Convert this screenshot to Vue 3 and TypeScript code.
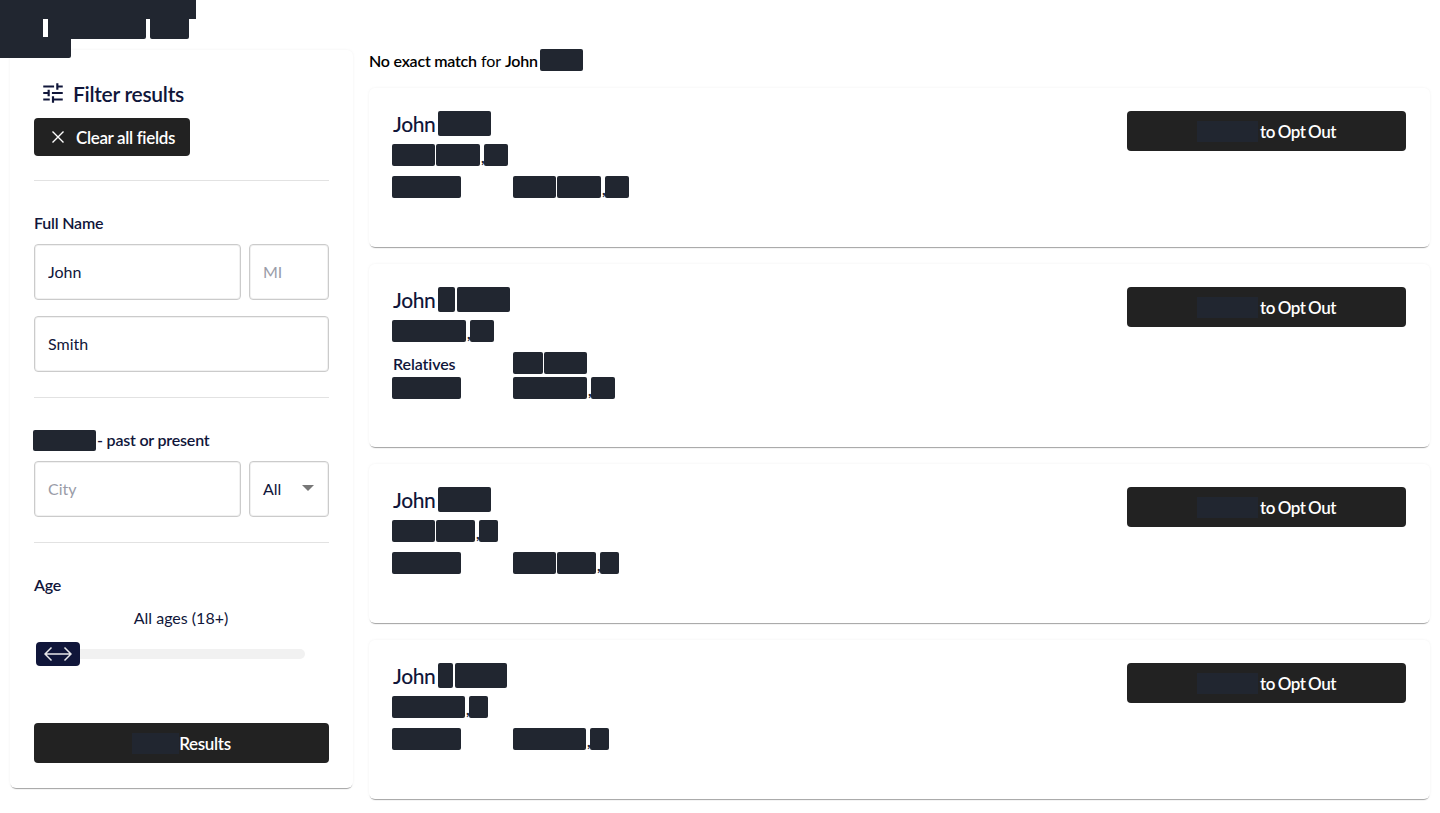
<script setup lang="ts">
interface Part { w: number; comma?: boolean }
interface Result {
  name: Part[]
  address: Part[]
  relatives: boolean
  rel: Part[]
  rows: Part[]
}
const results: Result[] = [
  { name: [{ w: 53 }], address: [{ w: 43 }, { w: 44, comma: true }, { w: 24 }], relatives: false, rel: [], rows: [{ w: 43 }, { w: 44, comma: true }, { w: 24 }] },
  { name: [{ w: 17 }, { w: 53 }], address: [{ w: 74, comma: true }, { w: 24 }], relatives: true, rel: [{ w: 30 }, { w: 43 }], rows: [{ w: 74, comma: true }, { w: 24 }] },
  { name: [{ w: 53 }], address: [{ w: 43 }, { w: 39, comma: true }, { w: 19 }], relatives: false, rel: [], rows: [{ w: 43 }, { w: 39, comma: true }, { w: 19 }] },
  { name: [{ w: 15 }, { w: 52 }], address: [{ w: 73, comma: true }, { w: 19 }], relatives: false, rel: [], rows: [{ w: 73, comma: true }, { w: 19 }] },
]
</script>

<template>
  <div class="page">
    <header class="top">
      <div class="top-a"></div>
      <div class="top-b">
        <div class="top-b1"><i class="bar"></i></div>
        <div class="top-b2"></div>
      </div>
      <div class="top-c"></div>
    </header>

    <div class="columns">
      <aside class="side">
        <h2 class="side-title">
          <svg class="tune" viewBox="0 0 24 24" width="26" height="26" fill="currentColor" aria-hidden="true">
            <path d="M3 17v2h6v-2H3zM3 5v2h10V5H3zm10 16v-2h8v-2h-8v-2h-2v6h2zM7 9v2H3v2h4v2h2V9H7zm14 4v-2H11v2h10zm-6-4h2V7h4V5h-4V3h-2v6z" />
          </svg>
          Filter results
        </h2>
        <button class="btn clear" type="button">
          <svg viewBox="0 0 14 14" width="14" height="14" fill="none" stroke="#fff" stroke-width="1.4" aria-hidden="true">
            <path d="M1.5 1.5l11 11M12.5 1.5l-11 11" />
          </svg>
          Clear all fields
        </button>
        <hr class="rule rule-first" />

        <div class="label label-name">Full Name</div>
        <div class="field-row row-name">
          <input class="field grow" value="John" />
          <input class="field small" placeholder="MI" />
        </div>
        <input class="field wide" value="Smith" />
        <hr class="rule rule-name" />

        <div class="label label-place"><span class="r place-r"></span>- past or present</div>
        <div class="field-row row-place">
          <input class="field grow" placeholder="City" />
          <div class="field small select">All<span class="caret"></span></div>
        </div>
        <hr class="rule rule-place" />

        <div class="label label-age">Age</div>
        <div class="ages">All ages (18+)</div>
        <div class="slider">
          <div class="thumb">
            <svg viewBox="0 0 28 16" width="28" height="16" fill="none" stroke="#e8e8ea" stroke-width="1.5" aria-hidden="true">
              <path d="M1 8h26M7.5 1.5L1 8l6.5 6.5M20.5 1.5L27 8l-6.5 6.5" />
            </svg>
          </div>
        </div>
        <button class="btn submit" type="button"><span class="hidden-word w46"></span>Results</button>
      </aside>

      <main class="results">
        <p class="summary"><b>No exact match</b> for <b>John</b><span class="r summary-r"></span></p>

        <article v-for="(item, i) in results" :key="i" class="card" :class="{ tall: item.relatives }">
          <div class="info">
            <div class="name">
              John
              <span class="parts name-parts">
                <span v-for="(p, j) in item.name" :key="j" class="r" :style="{ width: p.w + 'px' }"></span>
              </span>
            </div>
            <div class="parts line">
              <template v-for="(p, j) in item.address" :key="j">
                <span class="r" :style="{ width: p.w + 'px' }"></span>
                <span v-if="p.comma" class="comma">,</span>
              </template>
            </div>
            <div v-if="item.relatives" class="detail rel-row">
              <span class="detail-left rel-label">Relatives</span>
              <span class="parts">
                <span v-for="(p, j) in item.rel" :key="j" class="r" :style="{ width: p.w + 'px' }"></span>
              </span>
            </div>
            <div class="detail" :class="item.relatives ? 'after-rel' : 'plain-row'">
              <span class="detail-left"><span class="r left-r"></span></span>
              <span class="parts">
                <template v-for="(p, j) in item.rows" :key="j">
                  <span class="r" :style="{ width: p.w + 'px' }"></span>
                  <span v-if="p.comma" class="comma">,</span>
                </template>
              </span>
            </div>
          </div>
          <button class="btn opt" type="button"><span class="hidden-word w60"></span>to Opt Out</button>
        </article>
      </main>
    </div>
  </div>
</template>

<style>
body { background: #fff; }
</style>

<style scoped>
.page {
  font-family: Lato, "Liberation Sans", sans-serif;
  color: #10163a;
  font-size: 16px;
  height: 813px;
  overflow: hidden;
  background: #fff;
}
.r {
  display: inline-block;
  height: 22px;
  background: #212630;
  border-radius: 2px;
}
.top { height: 50px; position: relative; z-index: 2; }
.top-a { width: 196px; height: 19px; background: #212630; }
.top-b { display: flex; gap: 4px; height: 20px; }
.top-b1 { width: 146px; background: #212630; border-radius: 0 0 2px 0; padding-left: 43px; box-sizing: border-box; }
.bar { display: block; width: 5px; height: 18px; background: #fff; }
.top-b2 { width: 39px; background: #212630; border-radius: 0 0 2px 2px; }
.top-c { width: 71px; height: 19px; background: #212630; border-radius: 0 0 2px 0; }

.columns { display: flex; align-items: flex-start; gap: 16px; padding-left: 10px; }

.side {
  width: 343px;
  height: 738px;
  box-sizing: border-box;
  padding: 28px 24px 0;
  background: #fff;
  border-radius: 6px;
  box-shadow: 0 2px 1px -1px rgba(0, 0, 0, 0.35), 0 0 3px rgba(0, 0, 0, 0.06);
}
.side-title {
  display: flex;
  align-items: center;
  gap: 7px;
  margin: 0 0 10px 6px;
  height: 30px;
  font-size: 21px;
  font-weight: 600;
  letter-spacing: -0.28px;
  color: #10163a;
}
.btn {
  font-family: inherit;
  display: flex;
  align-items: center;
  justify-content: center;
  border: 0;
  border-radius: 4px;
  background: #222;
  color: #fff;
  font-size: 17px;
  font-weight: 600;
  letter-spacing: -0.35px;
  padding: 0;
}
.clear { width: 156px; height: 38px; gap: 11px; padding-left: 2px; }
.rule { border: 0; border-top: 1px solid #e2e2e2; margin: 0; }
.rule-first { margin-top: 24px; }
.label { font-weight: 600; font-size: 16px; line-height: 22px; letter-spacing: -0.2px; display: flex; align-items: center; }
.label-name { margin-top: 31px; }
.field-row { display: flex; gap: 8px; }
.row-name { margin-top: 10px; }
.row-place { margin-top: 10px; }
.field {
  font-family: inherit;
  font-size: 16px;
  color: #10163a;
  height: 56px;
  box-sizing: border-box;
  border: 1px solid #cbcbcb;
  box-shadow: inset 0 0 0 1px #f1f1f1;
  border-radius: 4px;
  padding: 0 13px 2px;
  background: #fff;
  outline: none;
  min-width: 0;
}
.field::placeholder { color: #9a9ca8; opacity: 1; }
.grow { width: 207px; }
.small { width: 80px; }
.wide { display: block; width: 295px; margin-top: 16px; }
.rule-name { margin-top: 25px; }
.label-place { margin-top: 31px; margin-left: -1px; gap: 1px; }
.place-r { width: 63px; height: 21px; }
.select { display: flex; align-items: center; justify-content: space-between; }
.caret {
  width: 0;
  height: 0;
  border-left: 6px solid transparent;
  border-right: 6px solid transparent;
  border-top: 6px solid #777;
  margin-right: 1px;
}
.rule-place { margin-top: 25px; }
.label-age { margin-top: 31px; }
.ages { text-align: center; margin-top: 11px; margin-right: 1px; line-height: 22px; }
.slider {
  position: relative;
  margin: 20px 0 0 2px;
  width: 269px;
  height: 10px;
  border-radius: 5px;
  background: #f1f1f1;
}
.thumb {
  position: absolute;
  left: 0;
  top: -7px;
  width: 44px;
  height: 24px;
  border-radius: 4px;
  background: #10163a;
  display: flex;
  align-items: center;
  justify-content: center;
}
.submit { width: 295px; height: 40px; margin-top: 64px; }
.hidden-word { display: inline-block; height: 21px; background: #212630; }
.w46 { width: 47px; }
.w60 { width: 61px; margin-right: 2px; }

.results { width: 1061px; }
.summary { margin: -1px 0 17px; height: 22px; display: flex; align-items: center; white-space: pre; font-size: 16px; color: #000; }
.summary b { font-weight: 600; letter-spacing: -0.22px; }
.summary-r { width: 43px; margin-left: 2px; }
.card {
  position: relative;
  display: flex;
  justify-content: space-between;
  align-items: flex-start;
  box-sizing: border-box;
  height: 159px;
  margin-bottom: 17px;
  padding: 23px 24px 0 23px;
  background: #fff;
  border-radius: 6px;
  box-shadow: 0 2px 1px -1px rgba(0, 0, 0, 0.35), 0 0 3px rgba(0, 0, 0, 0.06);
}
.card.tall { height: 183px; }
.name { display: flex; align-items: center; height: 25px; font-size: 21px; font-weight: 500; letter-spacing: -0.4px; padding-left: 1px; gap: 3px; }
.name .r { height: 25px; }
.parts { display: flex; align-items: flex-end; gap: 1px; }
.name-parts { gap: 2px; }
.line { margin-top: 8px; height: 22px; }
.plain-row { margin-top: 10px; height: 22px; }
.comma { width: 2px; font-size: 16px; font-weight: 700; line-height: 12px; margin-bottom: 3px; color: #212630; }
.detail { display: flex; }
.detail-left { width: 121px; flex: none; }
.left-r { width: 69px; }
.rel-row { margin-top: 10px; height: 22px; align-items: center; }
.rel-label { font-weight: 600; font-size: 16px; letter-spacing: -0.1px; padding-left: 1px; box-sizing: border-box; }
.after-rel { margin-top: 3px; height: 22px; }
.opt { width: 279px; height: 40px; word-spacing: -1px; letter-spacing: -0.5px; }
</style>
